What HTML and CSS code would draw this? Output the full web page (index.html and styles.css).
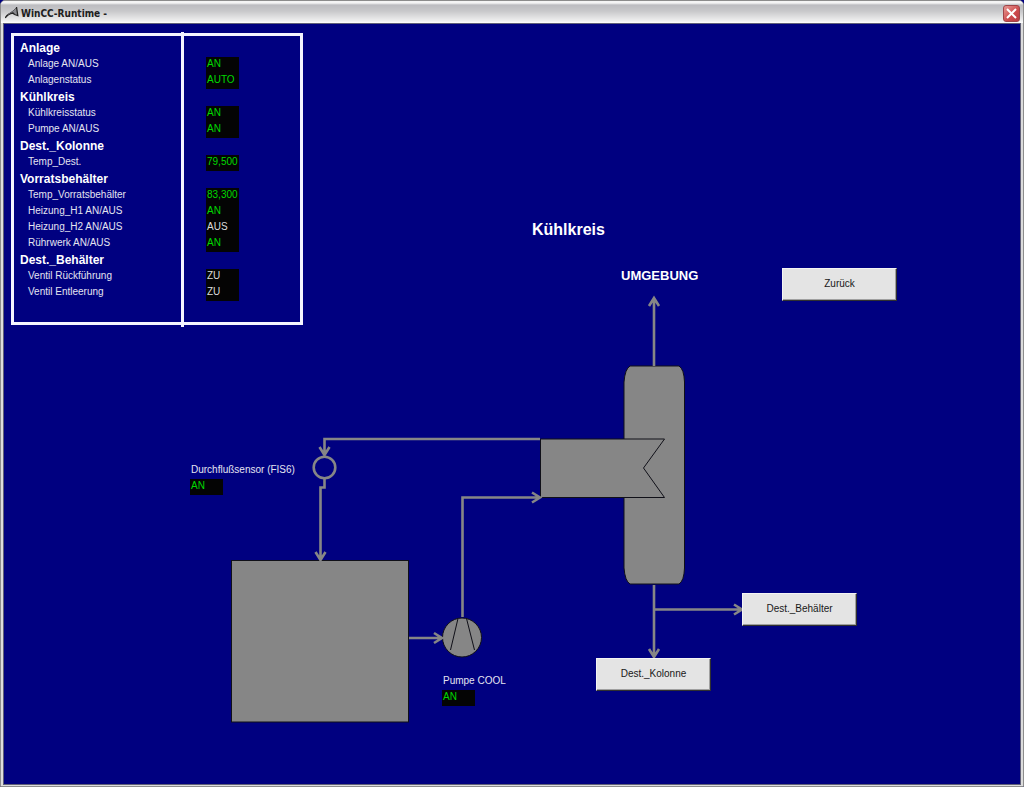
FILE: index.html
```html
<!DOCTYPE html>
<html lang="de">
<head>
<meta charset="utf-8">
<title>WinCC-Runtime</title>
<link rel="stylesheet" href="styles.css">
</head>
<body>
<div class="window">
  <header class="titlebar">
    <svg class="app-icon" width="14" height="14" viewBox="0 0 14 14" aria-hidden="true">
      <path d="M0 12 C2 8 5 6 8 5 L11.500 1 L12.500 9 L9.500 8.500 L8 7 C5 7.500 3 9 1 12 Z" fill="#8a8a8e"/>
      <path d="M0 12 C2 9 5 7.500 8 7 L9.500 8.500 M11.500 1 L12.800 9.500 L9.500 8.500" fill="none" stroke="#242424" stroke-width="1.300"/>
      <path d="M3 8.500 L8 5 L11 2" fill="none" stroke="#606064" stroke-width="1"/>
    </svg>
    <span class="caption">WinCC-Runtime -</span>
    <button class="close" type="button" aria-label="Schließen">
      <svg width="11" height="11" viewBox="0 0 11 11" aria-hidden="true"><path d="M1 1 L10 10 M10 1 L1 10" stroke="#fff" stroke-width="2"/></svg>
    </button>
  </header>
  <main class="stage">
    <section class="panel">
      <table class="status">
        <colgroup><col class="names"><col></colgroup>
        <tbody>
          <tr class="group"><th colspan="2">Anlage</th></tr>
          <tr><th scope="row">Anlage AN/AUS</th><td><output class="value">AN</output></td></tr>
          <tr><th scope="row">Anlagenstatus</th><td><output class="value">AUTO</output></td></tr>
          <tr class="group"><th colspan="2">Kühlkreis</th></tr>
          <tr><th scope="row">Kühlkreisstatus</th><td><output class="value">AN</output></td></tr>
          <tr><th scope="row">Pumpe AN/AUS</th><td><output class="value">AN</output></td></tr>
          <tr class="group"><th colspan="2">Dest._Kolonne</th></tr>
          <tr><th scope="row">Temp_Dest.</th><td><output class="value">79,500</output></td></tr>
          <tr class="group"><th colspan="2">Vorratsbehälter</th></tr>
          <tr><th scope="row">Temp_Vorratsbehälter</th><td><output class="value">83,300</output></td></tr>
          <tr><th scope="row">Heizung_H1 AN/AUS</th><td><output class="value">AN</output></td></tr>
          <tr><th scope="row">Heizung_H2 AN/AUS</th><td><output class="value off">AUS</output></td></tr>
          <tr><th scope="row">Rührwerk AN/AUS</th><td><output class="value">AN</output></td></tr>
          <tr class="group"><th colspan="2">Dest._Behälter</th></tr>
          <tr><th scope="row">Ventil Rückführung</th><td><output class="value off">ZU</output></td></tr>
          <tr><th scope="row">Ventil Entleerung</th><td><output class="value off">ZU</output></td></tr>
        </tbody>
      </table>
    </section>
    <section class="diagram" aria-label="Kühlkreis">
      <svg class="pipes" width="560" height="440" viewBox="220 290 560 440" aria-hidden="true">
        <g fill="#868686" stroke="#101018" stroke-width="1">
          <rect x="231.500" y="560.500" width="177" height="161.500"/>
          <path d="M630 366 H679 Q684 369 684.500 382 V568 Q684 581 679 584 H630 Q625 581 624 568 V382 Q625 369 630 366 Z"/>
          <path d="M540.500 439 H664.500 L643.500 468 L664.500 497.500 H540.500 Z"/>
          <circle cx="462" cy="637.500" r="19.500"/>
          <path d="M458 618.500 L450.500 650 M466.500 618.500 L474.500 650" fill="none"/>
        </g>
        <g fill="none" stroke="#868686" stroke-width="2.600">
          <path d="M654 366 V298 M649 306 L654 298 L659 306"/>
          <path d="M540 439 H324.500 V455 M319.500 447 L324.500 455 L329.500 447"/>
          <circle cx="324.500" cy="467.500" r="10.800"/>
          <path d="M324.500 479 V487.500 H320.500 V560 M315.500 552 L320.500 560 L325.500 552"/>
          <path d="M409 638 H442 M434 633 L442 638 L434 643"/>
          <path d="M462.500 617 V497.500 H540 M532 492.500 L540 497.500 L532 502.500"/>
          <path d="M654 585 V657 M649 649 L654 657 L659 649"/>
          <path d="M654 609.500 H742 M734 604.500 L742 609.500 L734 614.500"/>
        </g>
      </svg>
      <h1 class="node title">Kühlkreis</h1>
      <div class="node ambient">UMGEBUNG</div>
      <div class="node sensor"><label for="fis6">Durchflußsensor (FIS6)</label><output class="value" id="fis6">AN</output></div>
      <div class="node pump"><label for="cool">Pumpe COOL</label><output class="value" id="cool">AN</output></div>
      <button class="node nav back" type="button">Zurück</button>
      <button class="node nav tank" type="button">Dest._Behälter</button>
      <button class="node nav column" type="button">Dest._Kolonne</button>
    </section>
  </main>
</div>
</body>
</html>
```
FILE: styles.css
```css
* { box-sizing: border-box; }

body {
  margin: 0;
  background: #000080;
  color: #e4e4f0;
  font: 10px/16px "Liberation Sans", Arial, sans-serif;
}

.window {
  display: flex;
  flex-direction: column;
  min-height: 100vh;
  background: #dcdcdc;
  border: 1px solid #8c8c8c;
  border-radius: 5px 5px 0 0;
}

.titlebar {
  display: flex;
  align-items: center;
  gap: 2px;
  height: 22px;
  padding: 2px 3px 0 4px;
  background: linear-gradient(#f4f4f4 0, #f4f4f4 2px, #bcbcc0 4px, #c8c8ca 10px, #f0f0f0 20px, #fff 22px);
  border-radius: 4px 4px 0 0;
}

.caption {
  flex: 1;
  padding-top: 2px;
  color: #202020;
  font: bold 10px/16px "DejaVu Sans Condensed", "DejaVu Sans", sans-serif;
}

.close {
  display: flex;
  align-items: center;
  justify-content: center;
  width: 17px;
  height: 17px;
  padding: 0;
  border: 1px solid #a04448;
  border-radius: 3px;
  background: linear-gradient(135deg, #e89a94, #cc4a4c 60%, #b83c44);
}

.stage {
  position: relative;
  flex: 1;
  margin: 0 2px 1px 2px;
  padding: 9px 7px;
  border: 1px solid #606078;
  background: #000080;
}

.panel {
  position: relative;
  width: 292px;
  height: 292px;
  padding: 4px 6px;
  border: 3px solid #f4f4ff;
}

.panel::after {
  content: "";
  position: absolute;
  top: -4px;
  bottom: -5px;
  left: 167px;
  width: 3px;
  background: #f4f4ff;
}

.status {
  width: 100%;
  border-collapse: collapse;
  table-layout: fixed;
}

.names { width: 186px; }

.status th {
  height: 16px;
  padding: 0 0 2px 8px;
  text-align: left;
  font-weight: normal;
  line-height: 14px;
}

.status td {
  padding: 0;
}

.status .group th {
  height: 17px;
  padding: 0;
  color: #fff;
  font-weight: bold;
  font-size: 12px;
  line-height: 17px;
}

.value {
  display: block;
  width: 33px;
  height: 16px;
  padding-left: 1px;
  background: #040404;
  color: #00d800;
  line-height: 14px;
}

.value.off { color: #dcdcdc; }

.diagram {
  position: absolute;
  inset: 0;
}

.pipes {
  position: absolute;
  left: 216px;
  top: 266px;
}

.node {
  position: absolute;
  margin: 0;
  white-space: nowrap;
}

.title {
  left: 528px;
  top: 196px;
  color: #fff;
  font-size: 16px;
  line-height: 20px;
}

.ambient {
  left: 617px;
  top: 244px;
  color: #fff;
  font-size: 13px;
  font-weight: bold;
}

.sensor { left: 186px; top: 438px; }
.pump { left: 438px; top: 649px; }

.node label {
  display: block;
  height: 17px;
  padding-left: 1px;
}

.nav {
  width: 115px;
  height: 33px;
  padding: 0 0 2px;
  border: 1px solid;
  border-color: #f4f4f4 #303030 #303030 #f4f4f4;
  box-shadow: inset -1px -1px #a0a0a0;
  background: #e4e4e4;
  color: #181818;
  font: inherit;
}

.back { left: 778px; top: 244px; }
.tank { left: 738px; top: 569px; }
.column { left: 592px; top: 634px; }
```
